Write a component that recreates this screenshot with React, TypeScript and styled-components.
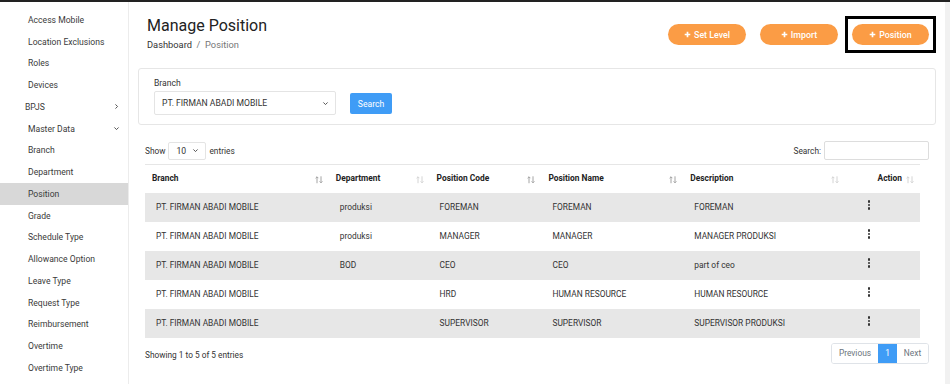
import React from "react";
import styled, { createGlobalStyle } from "styled-components";

const GlobalStyle = createGlobalStyle`
  html, body {
    margin: 0;
    padding: 0;
    background: #ffffff;
    font-family: Roboto, "Liberation Sans", sans-serif;
    color: #333;
  }
  * { box-sizing: border-box; }
`;

const Page = styled.div`
  width: 950px;
  height: 384px;
  overflow: hidden;
  border-top: 2px solid #222;
  display: flex;
  position: relative;
`;

const Sidebar = styled.nav`
  width: 129px;
  flex-shrink: 0;
  border-right: 1px solid #ececec;
  padding-top: 7px;
  display: flex;
  flex-direction: column;
`;

const NavItem = styled.div<{ $active?: boolean; $indent?: number }>`
  height: 21.75px;
  display: flex;
  align-items: center;
  justify-content: space-between;
  padding-left: ${(p) => p.$indent ?? 28}px;
  padding-right: 8px;
  font-size: 8.6px;
  color: #3a3a3a;
  background: ${(p) => (p.$active ? "#d8d8d8" : "transparent")};
`;

const Main = styled.main`
  flex: 1;
  padding: 0 9px 0 9px;
  display: flex;
  flex-direction: column;
  border-right: 5px solid #f1f1f1;
`;

const Header = styled.div`
  display: flex;
  justify-content: space-between;
  align-items: flex-start;
  padding: 14px 0 0 9px;
  height: 66px;
`;

const Title = styled.h1`
  margin: 0;
  font-size: 16px;
  font-weight: 400;
  color: #222;
  line-height: 20px;
`;

const Crumbs = styled.div`
  margin-top: 3px;
  font-size: 9.3px;
  color: #333;
  span {
    color: #777;
  }
`;

const Actions = styled.div`
  display: flex;
  gap: 14px;
  padding-top: 8px;
  padding-right: 7px;
`;

const OrangeButton = styled.button<{ $w: number }>`
  width: ${(p) => p.$w}px;
  height: 21px;
  border: none;
  border-radius: 11px;
  background: #fb9c45;
  color: #fff;
  font-family: inherit;
  font-size: 8.8px;
  font-weight: 500;
  display: flex;
  align-items: center;
  justify-content: center;
  gap: 3px;
  padding: 0;
`;

const Highlight = styled.div`
  border: 3px solid #000;
  padding: 5px 4px;
  margin: -8px -7px;
`;

const FilterCard = styled.div`
  height: 57px;
  border: 1px solid #e6e6e6;
  border-radius: 3px;
  padding: 9px 15px 9px;
  display: flex;
  align-items: flex-end;
  gap: 14px;
`;

const Field = styled.div`
  display: flex;
  flex-direction: column;
  gap: 3px;
`;

const Label = styled.label`
  font-size: 8.6px;
  color: #333;
`;

const Select = styled.div<{ $w: number; $h: number }>`
  width: ${(p) => p.$w}px;
  height: ${(p) => p.$h}px;
  border: 1px solid #e4e4e4;
  border-radius: 2px;
  display: flex;
  align-items: center;
  justify-content: space-between;
  padding: 0 6px 0 7px;
  font-size: 8.6px;
  color: #333;
  background: #fff;
`;

const BlueButton = styled.button`
  width: 42px;
  height: 21px;
  border: none;
  border-radius: 2px;
  background: #3f9cf6;
  color: #fff;
  font-family: inherit;
  font-size: 8.6px;
  padding: 0;
  margin-bottom: 1px;
`;

const TableTools = styled.div`
  display: flex;
  justify-content: space-between;
  align-items: center;
  margin-top: 16px;
  padding: 0 7px 0 7px;
  font-size: 8.3px;
  color: #333;
`;

const Inline = styled.div`
  display: flex;
  align-items: center;
  gap: 3px;
`;

const SearchInput = styled.div`
  width: 105px;
  height: 19px;
  border: 1px solid #ddd;
  border-radius: 2px;
`;

const Table = styled.table`
  margin: 4px 16px 0 7px;
  border-collapse: collapse;
  font-size: 8.4px;
  table-layout: fixed;
  border-top: 1px solid #e6e6e6;
`;

const Th = styled.th<{ $w: number; $right?: boolean }>`
  width: ${(p) => p.$w}px;
  height: 28px;
  text-align: ${(p) => (p.$right ? "right" : "left")};
  padding: 0 6px 1px 7px;
  font-weight: 700;
  color: #222;
  position: relative;
`;

const SortSlot = styled.span`
  position: absolute;
  right: 6px;
  top: 50%;
  transform: translateY(-40%);
  display: flex;
`;

const Tr = styled.tr<{ $odd: boolean }>`
  background: ${(p) => (p.$odd ? "#e7e7e7" : "#fff")};
  height: 29px;
`;

const Td = styled.td<{ $pad?: number }>`
  padding: 0 6px 0 ${(p) => p.$pad ?? 11}px;
  color: #333;
  white-space: nowrap;
`;

const Kebab = styled.div`
  display: flex;
  flex-direction: column;
  gap: 1.3px;
  margin-left: 23px;
  margin-top: -4px;
  span {
    width: 2.4px;
    height: 2.4px;
    border-radius: 50%;
    background: #333;
  }
`;

const Footer = styled.div`
  display: flex;
  justify-content: space-between;
  align-items: center;
  padding: 5px 7px 0 7px;
  font-size: 8.3px;
  color: #333;
  & > span {
    margin-top: 3px;
  }
`;

const Pager = styled.div`
  display: flex;
  border: 1px solid #dfe3e8;
  border-radius: 3px;
  height: 21px;
  overflow: hidden;
`;

const PageItem = styled.div<{ $active?: boolean; $w: number }>`
  width: ${(p) => p.$w}px;
  display: flex;
  align-items: center;
  justify-content: center;
  font-size: 8.4px;
  color: ${(p) => (p.$active ? "#fff" : "#6c757d")};
  background: ${(p) => (p.$active ? "#3f9cf6" : "#fff")};
`;

const Chevron = ({ dir }: { dir: "down" | "right" }) => (
  <svg width="7" height="7" viewBox="0 0 10 10" fill="none" stroke="#444" strokeWidth="1.3">
    {dir === "down" ? <path d="M2 3.5 L5 6.5 L8 3.5" /> : <path d="M3.5 2 L6.5 5 L3.5 8" />}
  </svg>
);

const Plus = () => (
  <svg width="7" height="7" viewBox="0 0 10 10">
    <path d="M5 1 V9 M1 5 H9" stroke="#fff" strokeWidth="2.4" />
  </svg>
);

const SortArrows = ({ light }: { light?: boolean }) => (
  <svg width="8" height="8" viewBox="0 0 8 8" fill="none" stroke={light ? "#cfcfcf" : "#9a9a9a"} strokeWidth="0.9">
    <path d="M2 7.5 V1 M0.6 2.4 L2 1 L3.4 2.4" />
    <path d="M6 0.5 V7 M4.6 5.6 L6 7 L7.4 5.6" />
  </svg>
);

const navItems = [
  "Access Mobile",
  "Location Exclusions",
  "Roles",
  "Devices",
  "BPJS",
  "Master Data",
  "Branch",
  "Department",
  "Position",
  "Grade",
  "Schedule Type",
  "Allowance Option",
  "Leave Type",
  "Request Type",
  "Reimbursement",
  "Overtime",
  "Overtime Type",
];

const rows = [
  ["produksi", "FOREMAN", "FOREMAN", "FOREMAN"],
  ["produksi", "MANAGER", "MANAGER", "MANAGER PRODUKSI"],
  ["BOD", "CEO", "CEO", "part of ceo"],
  ["", "HRD", "HUMAN RESOURCE", "HUMAN RESOURCE"],
  ["", "SUPERVISOR", "SUPERVISOR", "SUPERVISOR PRODUKSI"],
];

const columns = [
  { label: "Branch", w: 184 },
  { label: "Department", w: 101, light: true },
  { label: "Position Code", w: 112 },
  { label: "Position Name", w: 142 },
  { label: "Description", w: 162, light: true },
  { label: "Action", w: 75, right: true, light: true },
];

export default function App() {
  return (
    <>
      <GlobalStyle />
      <Page>
        <Sidebar>
          {navItems.map((item) => (
            <NavItem
              key={item}
              $active={item === "Position"}
              $indent={item === "BPJS" ? 25 : 28}
            >
              {item}
              {item === "BPJS" && <Chevron dir="right" />}
              {item === "Master Data" && <Chevron dir="down" />}
            </NavItem>
          ))}
        </Sidebar>
        <Main>
          <Header>
            <div>
              <Title>Manage Position</Title>
              <Crumbs>
                Dashboard <span>&nbsp;/&nbsp; Position</span>
              </Crumbs>
            </div>
            <Actions>
              <OrangeButton $w={78}>
                <Plus /> Set Level
              </OrangeButton>
              <OrangeButton $w={78}>
                <Plus /> Import
              </OrangeButton>
              <Highlight>
                <OrangeButton $w={77}>
                  <Plus /> Position
                </OrangeButton>
              </Highlight>
            </Actions>
          </Header>
          <FilterCard>
            <Field>
              <Label>Branch</Label>
              <Select $w={182} $h={24}>
                PT. FIRMAN ABADI MOBILE <Chevron dir="down" />
              </Select>
            </Field>
            <BlueButton>Search</BlueButton>
          </FilterCard>
          <TableTools>
            <Inline>
              Show
              <Select $w={38} $h={18}>
                10 <Chevron dir="down" />
              </Select>
              entries
            </Inline>
            <Inline>
              Search:
              <SearchInput />
            </Inline>
          </TableTools>
          <Table>
            <thead>
              <tr>
                {columns.map((c) => (
                  <Th key={c.label} $w={c.w} $right={c.right}>
                    <span style={c.right ? { marginRight: 12 } : undefined}>{c.label}</span>
                    <SortSlot>
                      <SortArrows light={c.light} />
                    </SortSlot>
                  </Th>
                ))}
              </tr>
            </thead>
            <tbody>
              {rows.map((r, i) => (
                <Tr key={i} $odd={i % 2 === 0}>
                  <Td>PT. FIRMAN ABADI MOBILE</Td>
                  <Td $pad={11}>{r[0]}</Td>
                  <Td $pad={10}>{r[1]}</Td>
                  <Td $pad={11}>{r[2]}</Td>
                  <Td $pad={11}>{r[3]}</Td>
                  <Td $pad={0}>
                    <Kebab>
                      <span />
                      <span />
                      <span />
                    </Kebab>
                  </Td>
                </Tr>
              ))}
            </tbody>
          </Table>
          <Footer>
            <span>Showing 1 to 5 of 5 entries</span>
            <Pager>
              <PageItem $w={46}>Previous</PageItem>
              <PageItem $w={19} $active>
                1
              </PageItem>
              <PageItem $w={31}>Next</PageItem>
            </Pager>
          </Footer>
        </Main>
      </Page>
    </>
  );
}
